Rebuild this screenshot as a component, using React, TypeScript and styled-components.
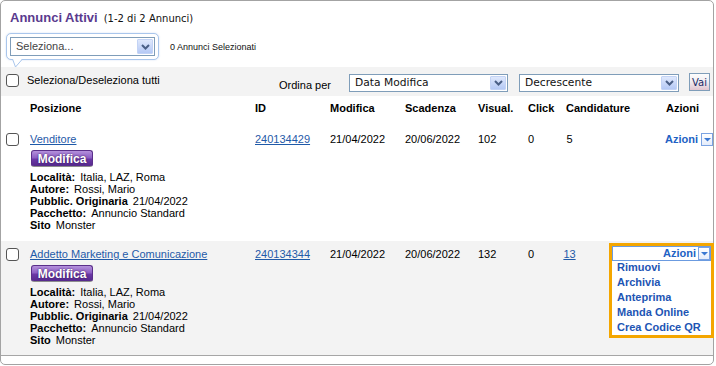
import React from 'react';
import styled, { createGlobalStyle } from 'styled-components';

const GlobalStyle = createGlobalStyle`
  html, body {
    margin: 0;
    padding: 0;
    background: #fff;
  }
  body {
    font-family: "Liberation Sans", Arial, sans-serif;
    font-size: 11px;
    color: #000;
  }
`;

const COLS = '29px 225px 75px 75px 73px 50px 38px 74px 1fr';

const elements = {
  panel: styled.div`
    box-sizing: border-box;
    width: 714px;
    height: 365px;
    border: 1px solid #a3a3a3;
    border-radius: 5px;
    background: #fff;
  `,
  heading: styled.div`
    padding: 9px 0 0 9px;
    height: 16px;
    line-height: 16px;
    font-size: 13px;
    font-weight: bold;
    color: #5a3a8e;
  `,
  headingCount: styled.span`
    margin-left: 6px;
    font-family: "DejaVu Sans", Verdana, sans-serif;
    font-size: 10px;
    font-weight: normal;
    color: #111;
  `,
  bulkRow: styled.div`
    display: flex;
    align-items: center;
    gap: 11px;
    height: 27px;
    margin: 7px 0 7px 5px;
  `,
  bubble: styled.div`
    position: relative;
    z-index: 1;
    padding: 3px;
    border: 1px solid #a9c6ec;
    border-radius: 5px;
    background: #fff;
    box-shadow: 0 0 2px rgba(120, 160, 220, 0.35);
  `,
  tail: styled.svg`
    position: absolute;
    left: 5px;
    top: 100%;
    overflow: visible;
  `,
  selectedCount: styled.span`
    font-size: 9px;
    color: #111;
  `,
  toolbar: styled.div`
    box-sizing: border-box;
    height: 29px;
    padding: 0 3px 0 5px;
    display: flex;
    justify-content: space-between;
    align-items: flex-start;
    background: #f3f3f3;
  `,
  checkAll: styled.label`
    display: flex;
    align-items: center;
    gap: 8px;
    margin-top: 7px;
    line-height: 13px;
  `,
  sortGroup: styled.div`
    display: flex;
    align-items: flex-start;
    margin-top: 6px;
  `,
  sortLabel: styled.span`
    margin: 6px 18px 0 0;
    line-height: 13px;
  `,
  vai: styled.button`
    box-sizing: border-box;
    width: 21px;
    height: 18px;
    margin-left: 10px;
    padding: 0;
    border: 1px solid #7f9db9;
    background: linear-gradient(#fdfdfd 0%, #f1eef2 45%, #e2c5d0 100%);
    font-family: "DejaVu Sans", Verdana, sans-serif;
    font-size: 10px;
    color: #1b2a66;
  `,
  headerRow: styled.div`
    display: grid;
    grid-template-columns: ${COLS};
    box-sizing: border-box;
    height: 30px;
    padding-top: 6px;
    line-height: 13px;
    font-weight: bold;
  `,
  row: styled.div<{ $alt?: boolean }>`
    display: grid;
    grid-template-columns: ${COLS};
    box-sizing: border-box;
    height: 115px;
    padding-top: 7px;
    line-height: 13px;
    background: ${(p) => (p.$alt ? '#f3f3f3' : '#fff')};
    border-bottom: ${(p) => (p.$alt ? '1px solid #a6a6a6' : 'none')};
  `,
  link: styled.a`
    color: #1f5aa8;
    text-decoration: underline;
  `,
  editButton: styled.button`
    display: block;
    box-sizing: border-box;
    width: 62px;
    height: 17px;
    margin: 4px 0 0 1px;
    padding: 0;
    border: 1px solid #5a2f8a;
    border-bottom-color: #8d8d8d;
    border-radius: 3px;
    background: linear-gradient(#b491dc 0%, #8d5fc4 45%, #6b38a6 55%, #55298c 100%);
    color: #fff;
    font: bold 12px "Liberation Sans", Arial, sans-serif;
    line-height: 14px;
    text-shadow: 0 0 2px #2e1250;
  `,
  details: styled.div`
    margin-top: 4px;
    line-height: 12px;
  `,
  detailLabel: styled.b`
    margin-right: 5px;
  `,
  center: styled.div`
    display: flex;
    justify-content: center;
    width: 7px;
  `,
  actionsCell: styled.div<{ $right?: number }>`
    position: relative;
    display: flex;
    justify-content: flex-end;
    align-items: flex-start;
    padding-right: ${(p) => p.$right ?? 0}px;
  `,
  actionsText: styled.span`
    color: #2162c4;
    font-weight: bold;
  `,
  menu: styled.div`
    position: absolute;
    top: -5px;
    right: -1px;
    z-index: 2;
    box-sizing: border-box;
    width: 105px;
    height: 95px;
    border: 3px solid #f4a600;
    background: #fff;
  `,
  menuHead: styled.div`
    box-sizing: border-box;
    height: 15px;
    display: flex;
    justify-content: flex-end;
    align-items: center;
    border: 1px solid #6b9be0;
  `,
  menuList: styled.ul`
    list-style: none;
    margin: -1px 0 0;
    padding: 0 0 0 5px;
  `,
  menuItem: styled.li`
    line-height: 15px;
    font-weight: bold;
    color: #1d55b4;
  `,
};

const Box = styled.span<{ $size?: number }>`
  display: inline-block;
  box-sizing: border-box;
  width: 13px;
  height: 13px;
  border: 1px solid #555;
  border-radius: 3px;
  background: #fff;
  margin-left: ${(p) => p.$size ?? 0}px;
`;

const SelectBox = styled.div<{ $width: number; $height: number; $verdana?: boolean }>`
  box-sizing: border-box;
  width: ${(p) => p.$width}px;
  height: ${(p) => p.$height}px;
  padding: 1px;
  display: flex;
  justify-content: space-between;
  border: 1px solid #7f9db9;
  background: #fff;
  font-family: ${(p) =>
    p.$verdana ? '"DejaVu Sans", Verdana, sans-serif' : '"Liberation Sans", Arial, sans-serif'};
  font-size: ${(p) => (p.$verdana ? '10.7px' : '11px')};
  color: ${(p) => (p.$verdana ? '#111' : '#444')};
`;

const SelectText = styled.span`
  align-self: center;
  padding-left: 4px;
  margin-top: -2px;
`;

const SelectArrow = styled.span`
  box-sizing: border-box;
  width: 16px;
  display: flex;
  align-items: center;
  justify-content: center;
  border: 1px solid #c3d3f5;
  border-radius: 1px;
  background: linear-gradient(#dfe8fc, #b5c9f5);
`;

const DropButton = styled.span<{ $gap: number }>`
  box-sizing: border-box;
  width: 12px;
  height: 13px;
  margin-left: ${(p) => p.$gap}px;
  display: flex;
  align-items: center;
  justify-content: center;
  border: 1px solid #7ba3e2;
  background: linear-gradient(#ffffff, #e4ecfb);
`;

function Chevron(): JSX.Element {
  return (
    <svg width="9" height="6" viewBox="0 0 9 6">
      <path d="M1 1 L4.5 4.5 L8 1" fill="none" stroke="#4a5f86" strokeWidth="2" />
    </svg>
  );
}

function Select(props: { width: number; height: number; text: string; verdana?: boolean }): JSX.Element {
  return (
    <SelectBox $width={props.width} $height={props.height} $verdana={props.verdana}>
      <SelectText>{props.text}</SelectText>
      <SelectArrow>
        <Chevron />
      </SelectArrow>
    </SelectBox>
  );
}

function Drop(props: { gap: number }): JSX.Element {
  return (
    <DropButton $gap={props.gap}>
      <svg width="7" height="5" viewBox="0 0 7 5">
        <path d="M0 1 L7 1 L3.5 4.5 Z" fill="#3a78d2" />
      </svg>
    </DropButton>
  );
}

interface Job {
  title: string;
  id: string;
  modified: string;
  expires: string;
  views: string;
  clicks: string;
  applications: string;
  appLink?: boolean;
  open?: boolean;
}

const jobs: Job[] = [
  {
    title: 'Venditore',
    id: '240134429',
    modified: '21/04/2022',
    expires: '20/06/2022',
    views: '102',
    clicks: '0',
    applications: '5',
  },
  {
    title: 'Addetto Marketing e Comunicazione',
    id: '240134344',
    modified: '21/04/2022',
    expires: '20/06/2022',
    views: '132',
    clicks: '0',
    applications: '13',
    appLink: true,
    open: true,
  },
];

const details: [string, string][] = [
  ['Località:', 'Italia, LAZ, Roma'],
  ['Autore:', 'Rossi, Mario'],
  ['Pubblic. Originaria', '21/04/2022'],
  ['Pacchetto:', 'Annuncio Standard'],
  ['Sito', 'Monster'],
];

const menuItems = ['Rimuovi', 'Archivia', 'Anteprima', 'Manda Online', 'Crea Codice QR'];

function JobRow({ job, alt }: { job: Job; alt: boolean }): JSX.Element {
  return (
    <elements.row $alt={alt}>
      <div>
        <Box $size={5} />
      </div>
      <div>
        <elements.link>{job.title}</elements.link>
        <elements.editButton>Modifica</elements.editButton>
        <elements.details>
          {details.map(([label, value]) => (
            <div key={label}>
              <elements.detailLabel>{label}</elements.detailLabel>
              {value}
            </div>
          ))}
        </elements.details>
      </div>
      <div>
        <elements.link>{job.id}</elements.link>
      </div>
      <div>{job.modified}</div>
      <div>{job.expires}</div>
      <div>{job.views}</div>
      <div>{job.clicks}</div>
      <div>
        <elements.center>
          {job.appLink ? <elements.link>{job.applications}</elements.link> : job.applications}
        </elements.center>
      </div>
      <elements.actionsCell>
        {job.open ? (
          <elements.menu>
            <elements.menuHead>
              <elements.actionsText>Azioni</elements.actionsText>
              <Drop gap={2} />
            </elements.menuHead>
            <elements.menuList>
              {menuItems.map((item) => (
                <elements.menuItem key={item}>{item}</elements.menuItem>
              ))}
            </elements.menuList>
          </elements.menu>
        ) : (
          <>
            <elements.actionsText>Azioni</elements.actionsText>
            <Drop gap={3} />
          </>
        )}
      </elements.actionsCell>
    </elements.row>
  );
}

export default function App(): JSX.Element {
  return (
    <>
      <GlobalStyle />
      <elements.panel>
        <elements.heading>
          Annunci Attivi<elements.headingCount>(1-2 di 2 Annunci)</elements.headingCount>
        </elements.heading>

        <elements.bulkRow>
          <elements.bubble>
            <Select width={145} height={19} text="Seleziona..." />
            <elements.tail width="11" height="9" viewBox="0 0 11 9">
              <path d="M0.5 -0.5 L3.5 8 L10.5 -0.5 Z" fill="#fff" />
              <path d="M0.5 0 L3.5 8 L10.5 0" fill="none" stroke="#a9c6ec" strokeWidth="1" />
            </elements.tail>
          </elements.bubble>
          <elements.selectedCount>0 Annunci Selezionati</elements.selectedCount>
        </elements.bulkRow>

        <elements.toolbar>
          <elements.checkAll>
            <Box />
            Seleziona/Deseleziona tutti
          </elements.checkAll>
          <elements.sortGroup>
            <elements.sortLabel>Ordina per</elements.sortLabel>
            <div style={{ marginTop: 1 }}>
              <Select width={159} height={18} text="Data Modifica" verdana />
            </div>
            <div style={{ marginTop: 1, marginLeft: 11 }}>
              <Select width={160} height={18} text="Decrescente" verdana />
            </div>
            <elements.vai>Vai</elements.vai>
          </elements.sortGroup>
        </elements.toolbar>

        <elements.headerRow>
          <div />
          <div>Posizione</div>
          <div>ID</div>
          <div>Modifica</div>
          <div>Scadenza</div>
          <div>Visual.</div>
          <div>Click</div>
          <div>Candidature</div>
          <elements.actionsCell $right={14}>Azioni</elements.actionsCell>
        </elements.headerRow>

        {jobs.map((job, i) => (
          <JobRow key={job.id} job={job} alt={i % 2 === 1} />
        ))}
      </elements.panel>
    </>
  );
}
